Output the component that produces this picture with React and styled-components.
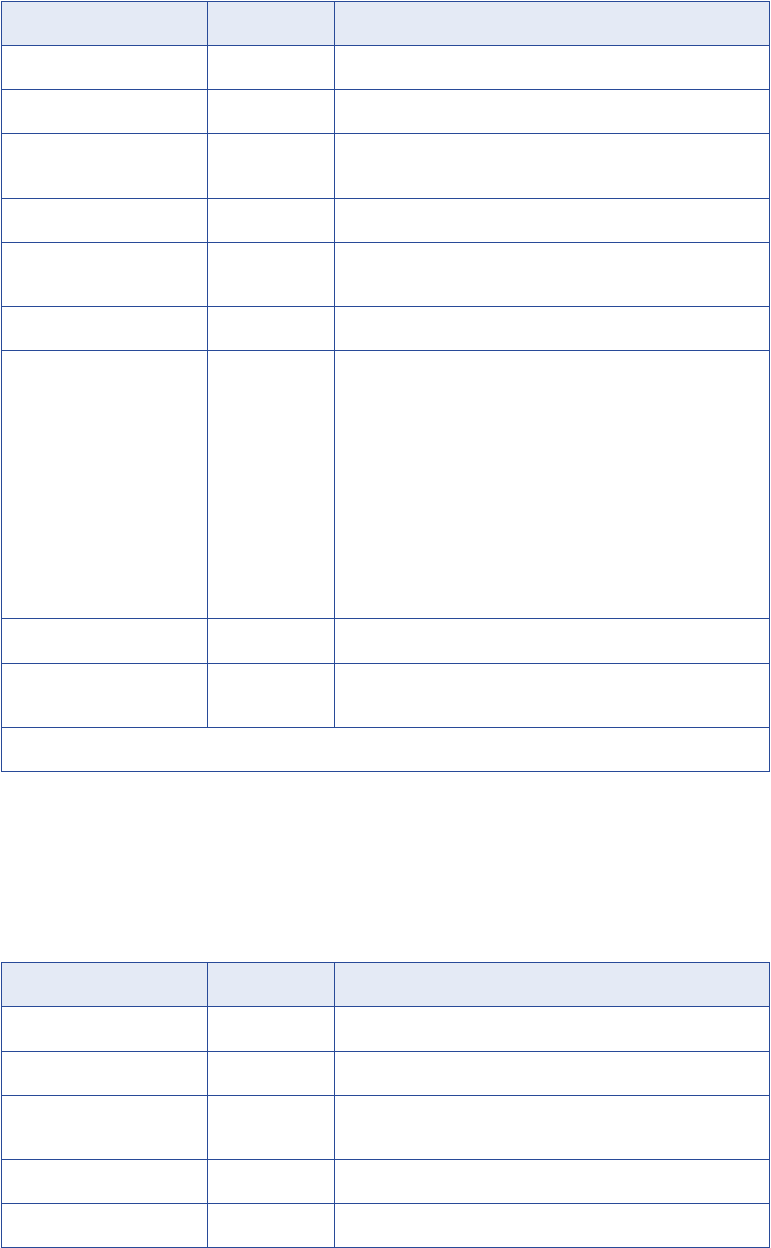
import React from "react";
import styled, { createGlobalStyle } from "styled-components";

const GlobalStyle = createGlobalStyle`
  html, body {
    margin: 0;
    padding: 0;
    background: #ffffff;
    font-family: "Liberation Sans", Arial, sans-serif;
  }
`;

const Page = styled.div`
  display: flex;
  flex-direction: column;
  gap: 190px;
  padding: 1px 0 0 1px;
  width: 770px;
`;

const Table = styled.table`
  width: 769px;
  border-collapse: collapse;
  table-layout: fixed;
`;

const Row = styled.tr`
  height: ${p => p.h}px;
`;

const HeadCell = styled.th`
  border: 1px solid #284a98;
  background: #e4eaf5;
  padding: 0;
`;

const Cell = styled.td`
  border: 1px solid #284a98;
  background: #ffffff;
  padding: 0;
`;

// row heights read off the reference, header row not included
const firstRows = [44, 44, 65, 44, 64, 44, 268, 45, 64];
const secondRows = [45, 44, 64, 44, 44];

const Cols = () => (
  <colgroup>
    <col style={{ width: 206 }} />
    <col style={{ width: 127 }} />
    <col />
  </colgroup>
);

const DataTable = ({ rows, footer }) => (
  <Table>
    <Cols />
    <thead>
      <Row h={44}>
        <HeadCell />
        <HeadCell />
        <HeadCell />
      </Row>
    </thead>
    <tbody>
      {rows.map((h, i) => (
        <Row key={i} h={h}>
          <Cell />
          <Cell />
          <Cell />
        </Row>
      ))}
      {footer && (
        <Row h={44}>
          <Cell colSpan={3} />
        </Row>
      )}
    </tbody>
  </Table>
);

export default function App() {
  return (
    <>
      <GlobalStyle />
      <Page>
        <DataTable rows={firstRows} footer />
        <DataTable rows={secondRows} />
      </Page>
    </>
  );
}
